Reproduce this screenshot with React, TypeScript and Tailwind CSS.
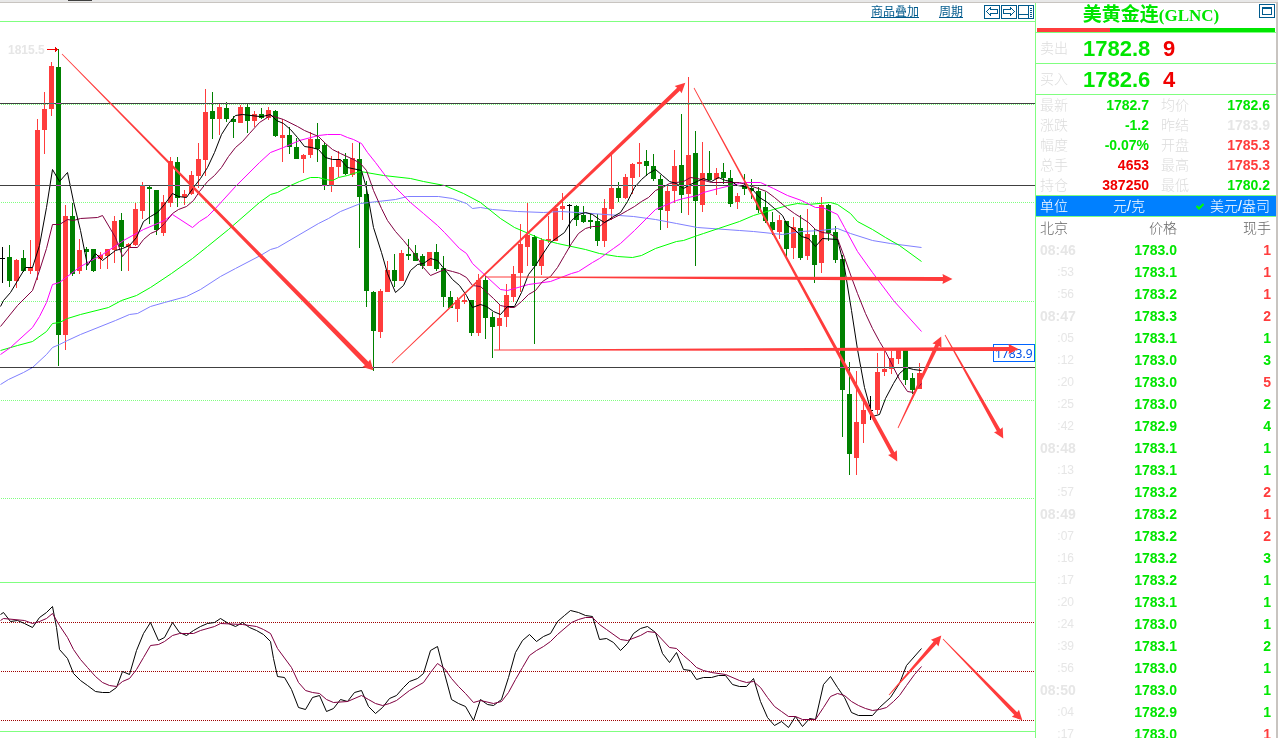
import { clsx } from 'clsx'

type Kind = 'up' | 'down' | 'flat'
type Candle = [kind: Kind, high: number, top: number, bottom: number, low: number]
type Point = [x: number, y: number]

const STEP = 7

const candles: Candle[] = [
  ['flat', 247, 258, 259, 283],
  ['down', 245, 257, 281, 287],
  ['up', 259, 260, 281, 288],
  ['down', 250, 258, 271, 272],
  ['up', 240, 267, 271, 274],
  ['up', 119, 130, 271, 280],
  ['up', 92, 109, 130, 154],
  ['up', 62, 66, 109, 116],
  ['down', 49, 67, 335, 366],
  ['up', 205, 216, 335, 350],
  ['down', 203, 216, 274, 276],
  ['up', 239, 250, 271, 274],
  ['down', 247, 249, 252, 270],
  ['down', 249, 249, 271, 272],
  ['up', 252, 255, 259, 269],
  ['up', 249, 249, 256, 269],
  ['up', 216, 221, 250, 263],
  ['down', 213, 220, 247, 271],
  ['up', 243, 244, 247, 271],
  ['up', 203, 209, 245, 246],
  ['up', 182, 185, 211, 219],
  ['down', 186, 187, 189, 224],
  ['down', 190, 190, 230, 235],
  ['up', 195, 202, 233, 236],
  ['up', 157, 161, 203, 207],
  ['down', 157, 162, 198, 207],
  ['up', 190, 194, 197, 205],
  ['up', 171, 175, 194, 195],
  ['up', 143, 159, 176, 188],
  ['up', 89, 112, 160, 176],
  ['down', 92, 111, 119, 139],
  ['up', 104, 107, 119, 135],
  ['down', 102, 108, 119, 122],
  ['down', 116, 119, 122, 138],
  ['up', 105, 107, 123, 123],
  ['down', 104, 107, 121, 133],
  ['up', 111, 114, 121, 127],
  ['down', 108, 114, 118, 119],
  ['up', 107, 110, 118, 120],
  ['down', 110, 111, 136, 137],
  ['up', 119, 135, 138, 162],
  ['down', 127, 135, 147, 154],
  ['down', 138, 147, 159, 159],
  ['up', 154, 155, 159, 173],
  ['up', 132, 139, 155, 158],
  ['down', 123, 139, 149, 162],
  ['down', 142, 145, 186, 190],
  ['up', 156, 167, 186, 192],
  ['up', 151, 160, 167, 177],
  ['down', 153, 159, 174, 175],
  ['up', 143, 158, 175, 177],
  ['down', 142, 159, 197, 248],
  ['down', 181, 194, 291, 307],
  ['down', 291, 292, 331, 371],
  ['up', 289, 291, 332, 338],
  ['up', 261, 270, 292, 292],
  ['down', 254, 270, 281, 287],
  ['up', 250, 253, 281, 281],
  ['down', 239, 254, 256, 260],
  ['down', 245, 253, 261, 261],
  ['down', 254, 256, 266, 269],
  ['up', 252, 252, 266, 266],
  ['down', 244, 252, 269, 271],
  ['down', 256, 268, 297, 307],
  ['down', 291, 297, 308, 308],
  ['up', 297, 300, 309, 322],
  ['up', 295, 300, 302, 304],
  ['down', 300, 300, 333, 336],
  ['up', 274, 280, 333, 336],
  ['down', 276, 280, 318, 339],
  ['down', 312, 317, 327, 358],
  ['up', 305, 318, 326, 350],
  ['up', 284, 295, 317, 327],
  ['up', 266, 274, 297, 302],
  ['up', 224, 244, 273, 292],
  ['up', 203, 235, 247, 266],
  ['down', 235, 237, 266, 344],
  ['up', 238, 240, 266, 275],
  ['up', 216, 239, 241, 243],
  ['up', 205, 208, 241, 241],
  ['up', 193, 206, 209, 220],
  ['flat', 204, 205, 206, 248],
  ['down', 205, 206, 220, 226],
  ['down', 206, 215, 222, 223],
  ['down', 214, 220, 222, 229],
  ['down', 214, 221, 241, 246],
  ['up', 199, 208, 241, 247],
  ['up', 153, 188, 209, 220],
  ['down', 182, 188, 198, 202],
  ['up', 174, 177, 198, 199],
  ['up', 163, 164, 178, 194],
  ['up', 143, 162, 164, 177],
  ['down', 150, 161, 166, 176],
  ['down', 154, 166, 179, 181],
  ['down', 175, 179, 210, 230],
  ['up', 184, 191, 211, 228],
  ['up', 150, 166, 191, 203],
  ['down', 114, 165, 195, 213],
  ['up', 77, 155, 194, 215],
  ['down', 131, 153, 201, 266],
  ['up', 142, 173, 205, 212],
  ['down', 151, 173, 180, 180],
  ['up', 168, 173, 179, 195],
  ['down', 163, 172, 178, 184],
  ['down', 170, 178, 204, 207],
  ['up', 193, 196, 202, 209],
  ['down', 174, 186, 189, 195],
  ['down', 179, 188, 191, 199],
  ['down', 187, 191, 210, 213],
  ['down', 192, 207, 221, 223],
  ['down', 212, 222, 230, 235],
  ['up', 215, 220, 232, 239],
  ['down', 221, 221, 249, 257],
  ['up', 217, 227, 248, 259],
  ['down', 215, 228, 258, 260],
  ['up', 209, 234, 256, 260],
  ['down', 229, 235, 265, 283],
  ['up', 197, 205, 263, 273],
  ['down', 204, 205, 233, 241],
  ['down', 226, 232, 260, 263],
  ['down', 255, 259, 390, 437],
  ['down', 362, 394, 454, 475],
  ['up', 371, 422, 458, 475],
  ['up', 400, 410, 424, 443],
  ['flat', 396, 410, 411, 420],
  ['up', 353, 372, 410, 414],
  ['up', 351, 369, 372, 376],
  ['up', 351, 358, 369, 374],
  ['up', 350, 350, 359, 364],
  ['down', 350, 350, 380, 385],
  ['down', 373, 378, 390, 394],
  ['up', 363, 373, 389, 389],
]

const averages = [
  {
    id: 'ma60',
    color: '#8080ff',
    points:
      '0,384 8,379 23,372 32,367 46,354 52,347 59,344 67,340 80,334 115,320 129,314 137,313 150,306 164,302 186,296 200,289 220,276 235,268 260,255 270,249 277,247 318,223 328,218 340,211 360,203 395,199 407,196 438,196 452,198 466,203 472,208 480,207 492,209 517,211 543,212 560,211 577,212 633,216 655,219 676,223 697,227 739,230 753,231 782,234 801,231 820,230 837,228 850,233 872,240 890,243 921,247',
  },
  {
    id: 'ma40',
    color: '#00ff00',
    points:
      '0,350 17,345 32,341 46,331 52,323 59,322 67,318 80,314 108,307 121,300 136,295 150,287 171,273 192,258 207,246 228,229 259,202 270,194 277,192 290,185 299,181 310,177 318,177 325,179 332,180 338,177 347,175 353,173 360,171 383,175 410,178 423,181 444,185 463,193 480,202 500,218 514,227 528,233 542,239 557,243 585,249 599,253 617,256 632,257 641,255 655,248 676,241 683,240 697,235 703,233 718,228 739,221 753,215 773,209 787,205 797,203 807,204 830,202 837,204 850,213 857,221 872,229 885,237 899,245 921,261',
  },
  {
    id: 'ma20',
    color: '#ff00ff',
    points:
      '0,354 10,347 32,327 39,316 46,302 52,284 59,282 80,266 102,254 123,240 143,229 164,220 172,214 192,227 199,221 207,216 214,209 235,186 259,162 270,152 283,147 299,140 318,135 327,134 340,134 347,137 353,139 361,143 367,152 375,162 387,178 395,187 410,202 423,213 437,225 444,232 459,248 466,253 472,263 487,277 500,289 507,290 514,288 528,284 550,281 571,273 578,271 592,262 599,258 613,248 620,243 634,230 648,216 655,209 662,206 676,200 683,198 697,195 703,192 718,188 739,183 745,182 760,182 773,188 787,195 801,200 815,207 822,207 837,214 844,227 857,251 872,272 893,300 921,331',
  },
  {
    id: 'ma10',
    color: '#800040',
    points:
      '0,326 17,305 32,290 39,270 46,248 52,224 59,224 67,219 73,220 80,218 97,217 102,215 115,237 122,256 129,247 137,247 143,239 150,233 157,230 164,223 172,213 178,209 186,206 193,200 199,191 207,181 214,175 221,167 228,156 235,147 242,141 249,133 259,122 270,115 283,119 297,126 304,130 318,136 325,143 332,149 340,153 353,159 360,163 366,170 373,190 381,208 387,220 395,231 403,240 416,256 423,267 430,275 444,269 452,271 459,273 466,277 472,285 480,286 493,298 500,305 509,307 514,307 521,301 528,294 535,290 542,281 550,276 557,267 564,255 571,243 578,233 585,228 592,226 599,226 604,222 620,214 627,210 634,206 641,201 648,197 655,190 662,187 669,183 676,182 683,181 690,177 697,178 711,182 739,182 758,188 766,191 774,197 787,208 794,213 808,222 815,229 822,232 829,233 837,238 844,257 851,277 857,293 865,313 872,328 879,341 885,351 893,367 899,379 907,391 913,392 921,383',
  },
  {
    id: 'ma5',
    color: '#000000',
    points:
      '0,306 3,300 10,292 25,267 32,267 39,245 46,207 52,169 59,181 67,172 73,201 80,230 87,265 95,253 102,260 115,250 122,248 129,245 136,237 143,221 150,216 157,212 164,204 172,193 178,196 186,197 193,187 200,178 207,167 214,152 221,134 228,123 235,115 242,114 259,116 262,116 270,114 276,120 283,123 290,129 297,137 304,146 311,147 318,149 325,157 332,159 340,159 347,167 361,170 366,188 373,227 381,252 387,273 395,292 403,285 410,270 417,264 423,263 430,258 437,260 445,270 452,279 459,285 466,295 472,307 480,304 486,306 493,311 500,314 507,306 514,306 521,292 528,274 535,265 542,254 550,242 557,237 564,232 571,220 578,214 585,212 592,214 599,219 604,222 613,216 620,212 627,201 634,187 641,179 648,173 655,169 662,175 669,181 676,183 683,188 690,184 703,178 711,181 718,177 725,180 731,181 737,185 744,186 752,189 759,197 767,202 774,208 782,215 787,225 794,229 801,236 808,238 815,246 822,238 837,239 844,267 851,310 857,349 864,387 872,416 879,414 885,398 893,383 899,373 906,367 913,369 921,370',
  },
]

const oscillators = [
  {
    id: 'k',
    color: '#000000',
    points:
      '0,614 3,612 10,621 17,620 24,623 32,627 39,617 46,612 52,606 56,627 59,649 67,658 73,673 80,680 87,685 95,691 102,692 109,692 116,687 122,671 129,674 136,650 143,633 150,622 158,640 164,637 172,622 179,632 186,635 193,630 200,626 207,623 214,622 220,618 228,623 235,626 242,622 249,627 256,630 263,634 270,641 273,658 277,676 284,677 291,689 298,707 305,709 312,697 319,695 326,711 333,708 340,699 347,701 354,692 361,690 368,706 375,713 382,707 389,698 396,695 403,687 409,681 417,678 423,673 430,650 437,646 444,673 451,699 458,703 465,706 473,720 480,699 487,704 493,705 501,699 508,677 515,652 522,640 529,634 536,641 543,636 550,633 557,621 564,615 570,610 578,612 585,615 592,616 599,639 606,638 613,642 620,650 627,643 633,633 640,628 647,626 655,632 662,653 669,662 676,652 683,669 690,670 696,679 703,677 711,677 718,675 725,675 732,684 739,686 746,686 753,678 760,701 767,717 774,725 781,721 788,727 795,716 802,726 809,718 815,719 823,684 830,676 837,687 844,697 851,712 858,715 872,715 879,707 890,697 899,683 906,665 921,648',
  },
  {
    id: 'd',
    color: '#800040',
    points:
      '0,620 3,618 24,620 32,623 39,621 46,618 52,613 59,625 67,637 73,649 80,659 87,667 95,676 102,682 109,685 116,686 122,681 129,678 136,669 143,657 150,645 158,644 164,641 172,635 179,633 193,633 200,630 214,626 220,623 242,624 256,626 263,629 270,633 277,648 291,667 298,682 305,690 312,692 319,693 326,699 333,702 347,701 361,695 368,699 375,703 382,705 389,703 396,700 409,690 423,682 430,672 437,663 444,668 451,678 458,686 465,693 473,702 480,700 493,703 501,701 508,692 515,679 522,667 529,655 536,650 543,646 550,641 557,634 571,622 578,619 585,617 592,617 599,624 606,629 620,639 627,640 640,635 647,631 655,632 669,647 676,648 683,655 690,661 696,667 703,670 711,672 725,674 739,680 746,682 753,681 760,687 767,697 774,706 781,711 788,716 795,716 802,719 815,719 823,707 830,696 837,693 844,695 851,701 858,705 865,708 872,710 879,709 886,707 893,701 899,695 906,685 914,674 921,666',
  },
]

const quotes = [
  { label: '最新', value: '1782.7', tone: 'green' },
  { label: '均价', value: '1782.6', tone: 'green' },
  { label: '涨跌', value: '-1.2', tone: 'green' },
  { label: '昨结', value: '1783.9', tone: 'gray' },
  { label: '幅度', value: '-0.07%', tone: 'green' },
  { label: '开盘', value: '1785.3', tone: 'coral' },
  { label: '总手', value: '4653', tone: 'red' },
  { label: '最高', value: '1785.3', tone: 'coral' },
  { label: '持仓', value: '387250', tone: 'red' },
  { label: '最低', value: '1780.2', tone: 'green' },
]

const tones: Record<string, string> = {
  green: 'text-[#00e600]',
  gray: 'text-[#e6e6e6]',
  coral: 'text-[#ff3c3c]',
  red: 'text-[#f00000]',
}

const ticks: [time: string, price: string, volume: number, tone: string][] = [
  ['08:46', '1783.0', 1, 'coral'],
  [':53', '1783.1', 1, 'coral'],
  [':56', '1783.2', 1, 'coral'],
  ['08:47', '1783.3', 2, 'coral'],
  [':05', '1783.1', 1, 'green'],
  [':12', '1783.0', 3, 'green'],
  [':20', '1783.0', 5, 'coral'],
  [':25', '1783.0', 2, 'green'],
  [':42', '1782.9', 4, 'green'],
  ['08:48', '1783.1', 1, 'green'],
  [':13', '1783.1', 1, 'green'],
  [':57', '1783.2', 2, 'coral'],
  ['08:49', '1783.2', 1, 'coral'],
  [':07', '1783.2', 2, 'coral'],
  [':16', '1783.2', 3, 'green'],
  [':17', '1783.2', 1, 'green'],
  [':20', '1783.1', 1, 'green'],
  [':24', '1783.0', 1, 'green'],
  [':39', '1783.1', 2, 'green'],
  [':56', '1783.0', 1, 'green'],
  ['08:50', '1783.0', 1, 'green'],
  [':04', '1782.9', 1, 'green'],
  [':17', '1783.0', 1, 'coral'],
]

const candleColors: Record<Kind, string> = {
  up: '#ff3c3c',
  down: '#008000',
  flat: '#000000',
}

// Arrow whose shaft widens from a hairline at the tail to `width` at the head
function TrendArrow({ from, to, width }: { from: Point; to: Point; width: number }) {
  const dx = to[0] - from[0]
  const dy = to[1] - from[1]
  const length = Math.hypot(dx, dy)
  const angle = (Math.atan2(dy, dx) * 180) / Math.PI
  const w = width / 2
  const head = w + 3

  return (
    <path
      transform={`translate(${from[0]} ${from[1]}) rotate(${angle})`}
      fill="#ff3c3c"
      d={`M0 -0.4 L${length - 9} ${-w} L${length - 9.5} ${-head} L${length + 0.5} 0 L${length - 9.5} ${head} L${length - 9} ${w} L0 0.4 Z`}
    />
  )
}

function DottedLine({ y, color }: { y: number; color: string }) {
  return <path d={`M1 ${y}.5 H1035`} stroke={color} strokeDasharray="1 1" shapeRendering="crispEdges" />
}

function Curve({ points, color }: { points: string; color: string }) {
  return <polyline points={points} transform="translate(0.5 0.5)" fill="none" stroke={color} />
}

function PriceChart() {
  return (
    <svg viewBox="0 22 1035 560" className="block w-full" role="img" aria-label="K线图">
      {[104, 202, 301, 400, 498].map((y) => (
        <DottedLine key={y} y={y} color="#80ff80" />
      ))}
      <g shapeRendering="crispEdges">
        {candles.map(([kind, high, top, bottom, low], i) => {
          const x = i * STEP
          return (
            <g key={i} fill={candleColors[kind]}>
              <rect x={x + 2} y={high} width={1} height={low - high} />
              <rect x={x} y={top} width={5} height={bottom - top} />
            </g>
          )
        })}
      </g>
      {averages.map((line) => (
        <Curve key={line.id} points={line.points} color={line.color} />
      ))}
      <g fill="#bfbfbf" className="mix-blend-difference">
        {[103, 185, 367].map((y) => (
          <rect key={y} x={0} y={y} width={1035} height={1} />
        ))}
      </g>

      <text x={8} y={54} fill="#e6e6e6" fontSize={12} fontWeight={700} fontFamily="Liberation Sans, sans-serif">
        1815.5
      </text>
      <path d="M47 49.5 H58 M55.5 47 V52 M56.5 48 V51" stroke="#f00000" shapeRendering="crispEdges" />

      <rect x={993.5} y={344.5} width={41} height={17} fill="#ffffff" stroke="#0064ff" />
      <text x={995} y={358} fill="#0050e6" fontSize={12} fontFamily="Noto Sans, sans-serif">
        1783.9
      </text>

      <TrendArrow from={[62, 54]} to={[373, 370]} width={5} />
      <TrendArrow from={[392, 363]} to={[685, 83]} width={4} />
      <TrendArrow from={[694, 88]} to={[897, 461]} width={4} />
      <TrendArrow from={[485, 277]} to={[952, 279]} width={4} />
      <TrendArrow from={[494, 350]} to={[1018, 349]} width={4} />
      <TrendArrow from={[898, 428]} to={[941, 337]} width={4} />
      <TrendArrow from={[945, 335]} to={[1003, 438]} width={4} />
    </svg>
  )
}

function IndicatorChart() {
  return (
    <svg viewBox="0 583 1035 148" className="block w-full" role="img" aria-label="KD指标">
      {[622, 671, 720].map((y) => (
        <DottedLine key={y} y={y} color="#a00000" />
      ))}
      {oscillators.map((line) => (
        <Curve key={line.id} points={line.points} color={line.color} />
      ))}
      <TrendArrow from={[889, 695]} to={[941, 636]} width={4} />
      <TrendArrow from={[943, 639]} to={[1022, 720]} width={4} />
    </svg>
  )
}

function Toolbar() {
  return (
    <div className="flex h-[19px] items-center justify-end border-b border-[#80ff80] pr-px text-xs leading-4 text-[#005a8c]">
      <a href="#overlay" className="mr-5 underline">商品叠加</a>
      <a href="#period" className="mr-[21px] underline">周期</a>
      <div className="flex gap-px">
        <button aria-label="后退" className="h-3.5 w-4 border border-[#005a8c]">
          <svg viewBox="0 0 14 12" className="block w-full" fill="none" stroke="currentColor" shapeRendering="crispEdges">
            <path d="M1.5 5.5 L5.5 1.5 V3.5 H12.5 V7.5 H5.5 V9.5 L1.5 5.5" />
          </svg>
        </button>
        <button aria-label="前进" className="h-3.5 w-4 border border-[#005a8c]">
          <svg viewBox="0 0 14 12" className="block w-full" fill="none" stroke="currentColor" shapeRendering="crispEdges">
            <path d="M12.5 5.5 L8.5 1.5 V3.5 H1.5 V7.5 H8.5 V9.5 L12.5 5.5" />
          </svg>
        </button>
        <button aria-label="布局" className="h-3.5 w-4 border border-[#005a8c]">
          <svg viewBox="0 0 14 12" className="block w-full" fill="none" stroke="currentColor" shapeRendering="crispEdges">
            <path d="M0 8.5 H10 M9.5 0 V12 M11 2.5 H13 M11 4.5 H13 M11 6.5 H13 M11 8.5 H13 M11 10.5 H13" />
          </svg>
        </button>
      </div>
    </div>
  )
}

function BookRow({ label, price, size }: { label: string; price: string; size: number }) {
  return (
    <div className="flex h-[31px] items-center border-b border-[#80ff80] pl-1 font-bold">
      <span className="w-[43px] text-sm font-light text-[#dcdcdc]">{label}</span>
      <span className="w-20 text-[22px] text-[#00e600]">{price}</span>
      <span className="text-[22px] text-[#f00000]">{size}</span>
    </div>
  )
}

function QuotePanel() {
  return (
    <aside className="w-[243px] shrink-0 overflow-hidden border-r-2 border-l border-r-[#c8c4c0] border-l-[#80ff80]">
      <header className="relative flex h-[25px] items-center justify-center pr-2.5 font-bold text-[#00e600]">
        <h1 className="text-[19px] leading-6">
          美黄金连<span className="font-['Liberation_Serif',serif] text-[17px] leading-6">(GLNC)</span>
        </h1>
        <button aria-label="最大化" className="absolute top-px right-px h-3.5 w-4 border border-[#005a8c] p-0.5">
          <span className="block h-full border border-t-2 border-[#005a8c]" />
        </button>
      </header>
      <div className="flex h-1 px-px">
        <div className="w-[73px] bg-[#ff3c3c]" />
        <div className="grow bg-[#00e600]" />
      </div>
      <div className="border-t border-[#80ff80]">
        <BookRow label="卖出" price="1782.8" size={9} />
        <BookRow label="买入" price="1782.6" size={4} />
      </div>

      <dl className="grid grid-cols-[109px_109px] gap-x-3 pl-1 text-sm leading-5">
        {quotes.map((quote) => (
          <div key={quote.label} className="flex justify-between">
            <dt className="font-light text-[#dcdcdc]">{quote.label}</dt>
            <dd className={clsx('font-bold', tones[quote.tone])}>{quote.value}</dd>
          </div>
        ))}
      </dl>

      <div className="flex h-[22px] items-center border-y border-[#80ff80] bg-[#0080ff] pr-1.5 pl-1 text-sm leading-5 font-light text-white">
        <span className="w-[73px]">单位</span>
        <button>元/克</button>
        <button className="ml-auto flex items-center gap-1.5">
          <svg viewBox="0 0 8 7" className="w-2" fill="none" stroke="#00ff00" strokeWidth="2">
            <path d="M0.5 3 L3 5.5 L7.5 1" />
          </svg>
          美元/盎司
        </button>
      </div>

      <table className="w-full table-fixed text-sm leading-[22px] font-bold">
        <thead className="font-light text-[#666666]">
          <tr>
            <th className="w-10 p-0 pl-1 text-left font-light">北京</th>
            <th className="w-[101px] p-0 text-right font-light">价格</th>
            <th className="p-0 pr-[5px] text-right font-light">现手</th>
          </tr>
        </thead>
        <tbody>
          {ticks.map(([time, price, volume, tone], i) => (
            <tr key={i}>
              <td className={clsx('p-0 text-[#e6e6e6]', time.startsWith(':') ? 'pr-0.5 text-right text-xs leading-[22px] font-normal' : 'pl-1')}>
                {time}
              </td>
              <td className="p-0 text-right text-[#00e600]">{price}</td>
              <td className={clsx('p-0 pr-[5px] text-right', tones[tone])}>{volume}</td>
            </tr>
          ))}
        </tbody>
      </table>
    </aside>
  )
}

export default function App() {
  return (
    <div className="flex h-screen flex-col overflow-hidden bg-white font-['Liberation_Sans','Noto_Sans_CJK_SC',sans-serif]">
      <div className="h-[3px] shrink-0 border-b border-[#c8c4c0] bg-[#e8e8e8]">
        <div className="ml-[68px] h-px w-6 bg-[#404040]" />
      </div>
      <div className="flex min-h-0 grow">
        <main className="min-w-0 grow">
          <Toolbar />
          <PriceChart />
          <div className="border-y border-[#80ff80]">
            <IndicatorChart />
          </div>
        </main>
        <QuotePanel />
      </div>
    </div>
  )
}
